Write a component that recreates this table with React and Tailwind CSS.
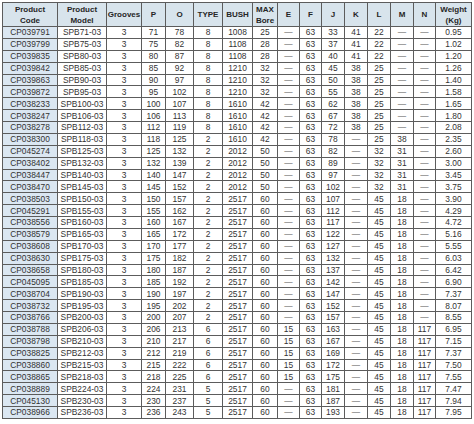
import React from "react";

const D = "—";

const columns = [
  { key: "code", label: ["Product", "Code"], width: "w-[55px]" },
  { key: "model", label: ["Product", "Model"], width: "w-[49px]" },
  { key: "grooves", label: ["Grooves"], width: "w-[35px]" },
  { key: "p", label: ["P"], width: "w-[24px]" },
  { key: "o", label: ["O"], width: "w-[28px]" },
  { key: "type", label: ["TYPE"], width: "w-[29px]" },
  { key: "bush", label: ["BUSH"], width: "w-[30px]" },
  { key: "bore", label: ["MAX", "Bore"], width: "w-[25px]" },
  { key: "e", label: ["E"], width: "w-[22px]" },
  { key: "f", label: ["F"], width: "w-[22px]" },
  { key: "j", label: ["J"], width: "w-[23px]" },
  { key: "k", label: ["K"], width: "w-[23px]" },
  { key: "l", label: ["L"], width: "w-[23px]" },
  { key: "m", label: ["M"], width: "w-[23px]" },
  { key: "n", label: ["N"], width: "w-[22px]" },
  { key: "weight", label: ["Weight", "(Kg)"], width: "w-[36px]" },
];

const rows = [
  ["CP039791", "SPB71-03", "3", "71", "78", "8", "1008", "25", D, "63", "33", "41", "22", D, D, "0.95"],
  ["CP039799", "SPB75-03", "3", "75", "82", "8", "1108", "28", D, "63", "37", "41", "22", D, D, "1.02"],
  ["CP039835", "SPB80-03", "3", "80", "87", "8", "1108", "28", D, "63", "40", "41", "22", D, D, "1.20"],
  ["CP039842", "SPB85-03", "3", "85", "92", "8", "1210", "32", D, "63", "45", "38", "25", D, D, "1.26"],
  ["CP039863", "SPB90-03", "3", "90", "97", "8", "1210", "32", D, "63", "50", "38", "25", D, D, "1.40"],
  ["CP039872", "SPB95-03", "3", "95", "102", "8", "1210", "32", D, "63", "55", "38", "25", D, D, "1.58"],
  ["CP038233", "SPB100-03", "3", "100", "107", "8", "1610", "42", D, "63", "62", "38", "25", D, D, "1.65"],
  ["CP038247", "SPB106-03", "3", "106", "113", "8", "1610", "42", D, "63", "67", "38", "25", D, D, "1.80"],
  ["CP038278", "SPB112-03", "3", "112", "119", "8", "1610", "42", D, "63", "72", "38", "25", D, D, "2.08"],
  ["CP038300", "SPB118-03", "3", "118", "125", "2", "1610", "42", D, "63", "78", D, "25", "38", D, "2.35"],
  ["CP045274", "SPB125-03", "3", "125", "132", "2", "2012", "50", D, "63", "82", D, "32", "31", D, "2.60"],
  ["CP038402", "SPB132-03", "3", "132", "139", "2", "2012", "50", D, "63", "89", D, "32", "31", D, "3.00"],
  ["CP038447", "SPB140-03", "3", "140", "147", "2", "2012", "50", D, "63", "97", D, "32", "31", D, "3.45"],
  ["CP038470", "SPB145-03", "3", "145", "152", "2", "2012", "50", D, "63", "102", D, "32", "31", D, "3.75"],
  ["CP038503", "SPB150-03", "3", "150", "157", "2", "2517", "60", D, "63", "107", D, "45", "18", D, "3.90"],
  ["CP045291", "SPB155-03", "3", "155", "162", "2", "2517", "60", D, "63", "112", D, "45", "18", D, "4.29"],
  ["CP038556", "SPB160-03", "3", "160", "167", "2", "2517", "60", D, "63", "117", D, "45", "18", D, "4.72"],
  ["CP038579", "SPB165-03", "3", "165", "172", "2", "2517", "60", D, "63", "122", D, "45", "18", D, "5.16"],
  ["CP038608", "SPB170-03", "3", "170", "177", "2", "2517", "60", D, "63", "127", D, "45", "18", D, "5.55"],
  ["CP038630", "SPB175-03", "3", "175", "182", "2", "2517", "60", D, "63", "132", D, "45", "18", D, "6.03"],
  ["CP038658", "SPB180-03", "3", "180", "187", "2", "2517", "60", D, "63", "137", D, "45", "18", D, "6.42"],
  ["CP045095", "SPB185-03", "3", "185", "192", "2", "2517", "60", D, "63", "142", D, "45", "18", D, "6.90"],
  ["CP038704", "SPB190-03", "3", "190", "197", "2", "2517", "60", D, "63", "147", D, "45", "18", D, "7.37"],
  ["CP038732", "SPB195-03", "3", "195", "202", "2", "2517", "60", D, "63", "152", D, "45", "18", D, "8.07"],
  ["CP038766", "SPB200-03", "3", "200", "207", "2", "2517", "60", D, "63", "157", D, "45", "18", D, "8.55"],
  ["CP038788", "SPB206-03", "3", "206", "213", "6", "2517", "60", "15", "63", "163", D, "45", "18", "117", "6.95"],
  ["CP038798", "SPB210-03", "3", "210", "217", "6", "2517", "60", "15", "63", "167", D, "45", "18", "117", "7.15"],
  ["CP038825", "SPB212-03", "3", "212", "219", "6", "2517", "60", "15", "63", "169", D, "45", "18", "117", "7.37"],
  ["CP038860", "SPB215-03", "3", "215", "222", "6", "2517", "60", "15", "63", "172", D, "45", "18", "117", "7.50"],
  ["CP038865", "SPB218-03", "3", "218", "225", "6", "2517", "60", "15", "63", "175", D, "45", "18", "117", "7.55"],
  ["CP038889", "SPB224-03", "3", "224", "231", "5", "2517", "60", D, "63", "181", D, "45", "18", "117", "7.47"],
  ["CP045130", "SPB230-03", "3", "230", "237", "5", "2517", "60", D, "63", "187", D, "45", "18", "117", "7.94"],
  ["CP038966", "SPB236-03", "3", "236", "243", "5", "2517", "60", D, "63", "193", D, "45", "18", "117", "7.95"],
];

const App = () => {
  return (
    <div className="w-[474px] h-[424px] bg-white pt-[2px] pl-[2px] font-['Liberation_Sans',Arial,sans-serif] text-[#333]">
      <table className="table-fixed border-collapse w-[469px] border border-[#5c5c5c]">
        <colgroup>
          {columns.map((c) => (
            <col key={c.key} className={c.width} />
          ))}
        </colgroup>
        <thead className="bg-[#d8e4ec] text-[#262626]">
          <tr>
            {columns.map((c) => (
              <th
                key={c.key}
                className="h-[24px] p-0 border border-[#5c5c5c] text-[8px] leading-[11px] font-bold text-center"
              >
                {c.label.map((line) => (
                  <div key={line}>{line}</div>
                ))}
              </th>
            ))}
          </tr>
        </thead>
        <tbody>
          {rows.map((r) => (
            <tr key={r[0]}>
              {r.map((v, i) => (
                <td
                  key={i}
                  className={
                    "h-[11.88px] p-0 border border-[#5c5c5c] text-[8.4px] leading-[10px] text-center whitespace-nowrap " +
                    (i === 0 ? "bg-[#dbe7f2]" : "bg-white") +
                    (v === D ? " text-[#555]" : "")
                  }
                >
                  {v}
                </td>
              ))}
            </tr>
          ))}
        </tbody>
      </table>
    </div>
  );
};

export default App;
